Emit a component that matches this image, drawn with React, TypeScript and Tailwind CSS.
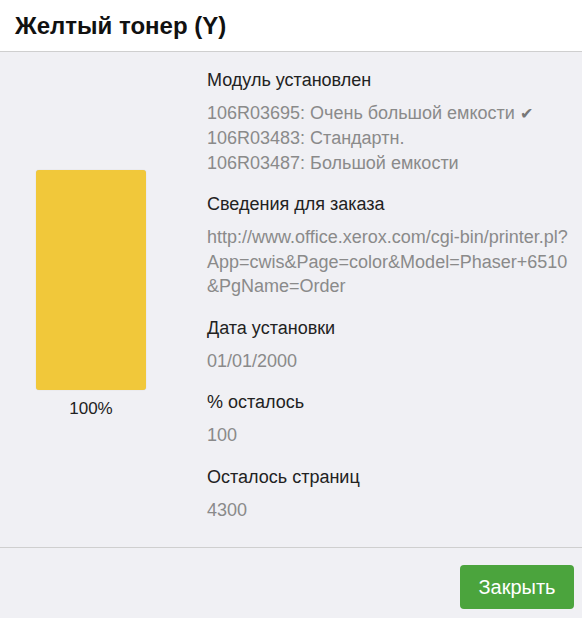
import React from "react";

const font = { fontFamily: '"Liberation Sans", Arial, sans-serif' };

function Section({ label, children, last }: { label: string; children: React.ReactNode; last?: boolean }) {
  return (
    <div className={last ? "" : "mb-[17px]"}>
      <div className="text-[18px] leading-[24px] text-[#222] mb-[9px]">{label}</div>
      <div className="text-[18px] leading-[24.5px] text-[#8a8a8a]">{children}</div>
    </div>
  );
}

export default function App() {
  return (
    <div style={font} className="w-[582px] h-[618px] bg-[#f0f0f4] flex flex-col overflow-hidden">
      <div className="h-[52px] bg-white border-b border-[#cfcfcf] flex items-center px-[15px]">
        <h1 className="text-[24px] font-bold text-[#111] leading-none">Желтый тонер (Y)</h1>
      </div>
      <div className="flex-1 flex items-center pt-[15px] pb-[24px]">
        <div className="w-[182px] flex flex-col items-center">
          <div className="w-[110px] h-[220px] bg-[#f1c83a] rounded-[3px] shadow-[0_0_1px_rgba(0,0,0,0.2)]" />
          <div className="text-[17px] leading-[24px] text-[#222] mt-[7px]">100%</div>
        </div>
        <div className="ml-[25px] flex-1">
          <Section label="Модуль установлен">
            <div>
              106R03695: Очень большой емкости <span className="text-[#777] text-[16px]">✔</span>
            </div>
            <div>106R03483: Стандартн.</div>
            <div>106R03487: Большой емкости</div>
          </Section>
          <Section label="Сведения для заказа">
            <div>http://www.office.xerox.com/cgi-bin/printer.pl?</div>
            <div>App=cwis&amp;Page=color&amp;Model=Phaser+6510</div>
            <div>&amp;PgName=Order</div>
          </Section>
          <Section label="Дата установки">01/01/2000</Section>
          <Section label="% осталось">100</Section>
          <Section label="Осталось страниц" last>4300</Section>
        </div>
      </div>
      <div className="border-t border-[#cfcfcf] h-[71px] flex items-start justify-end pt-[17px] pr-[8px]">
        <button className="w-[114px] h-[44px] bg-[#4ba43d] text-white text-[20px] rounded-[4px]">Закрыть</button>
      </div>
    </div>
  );
}
